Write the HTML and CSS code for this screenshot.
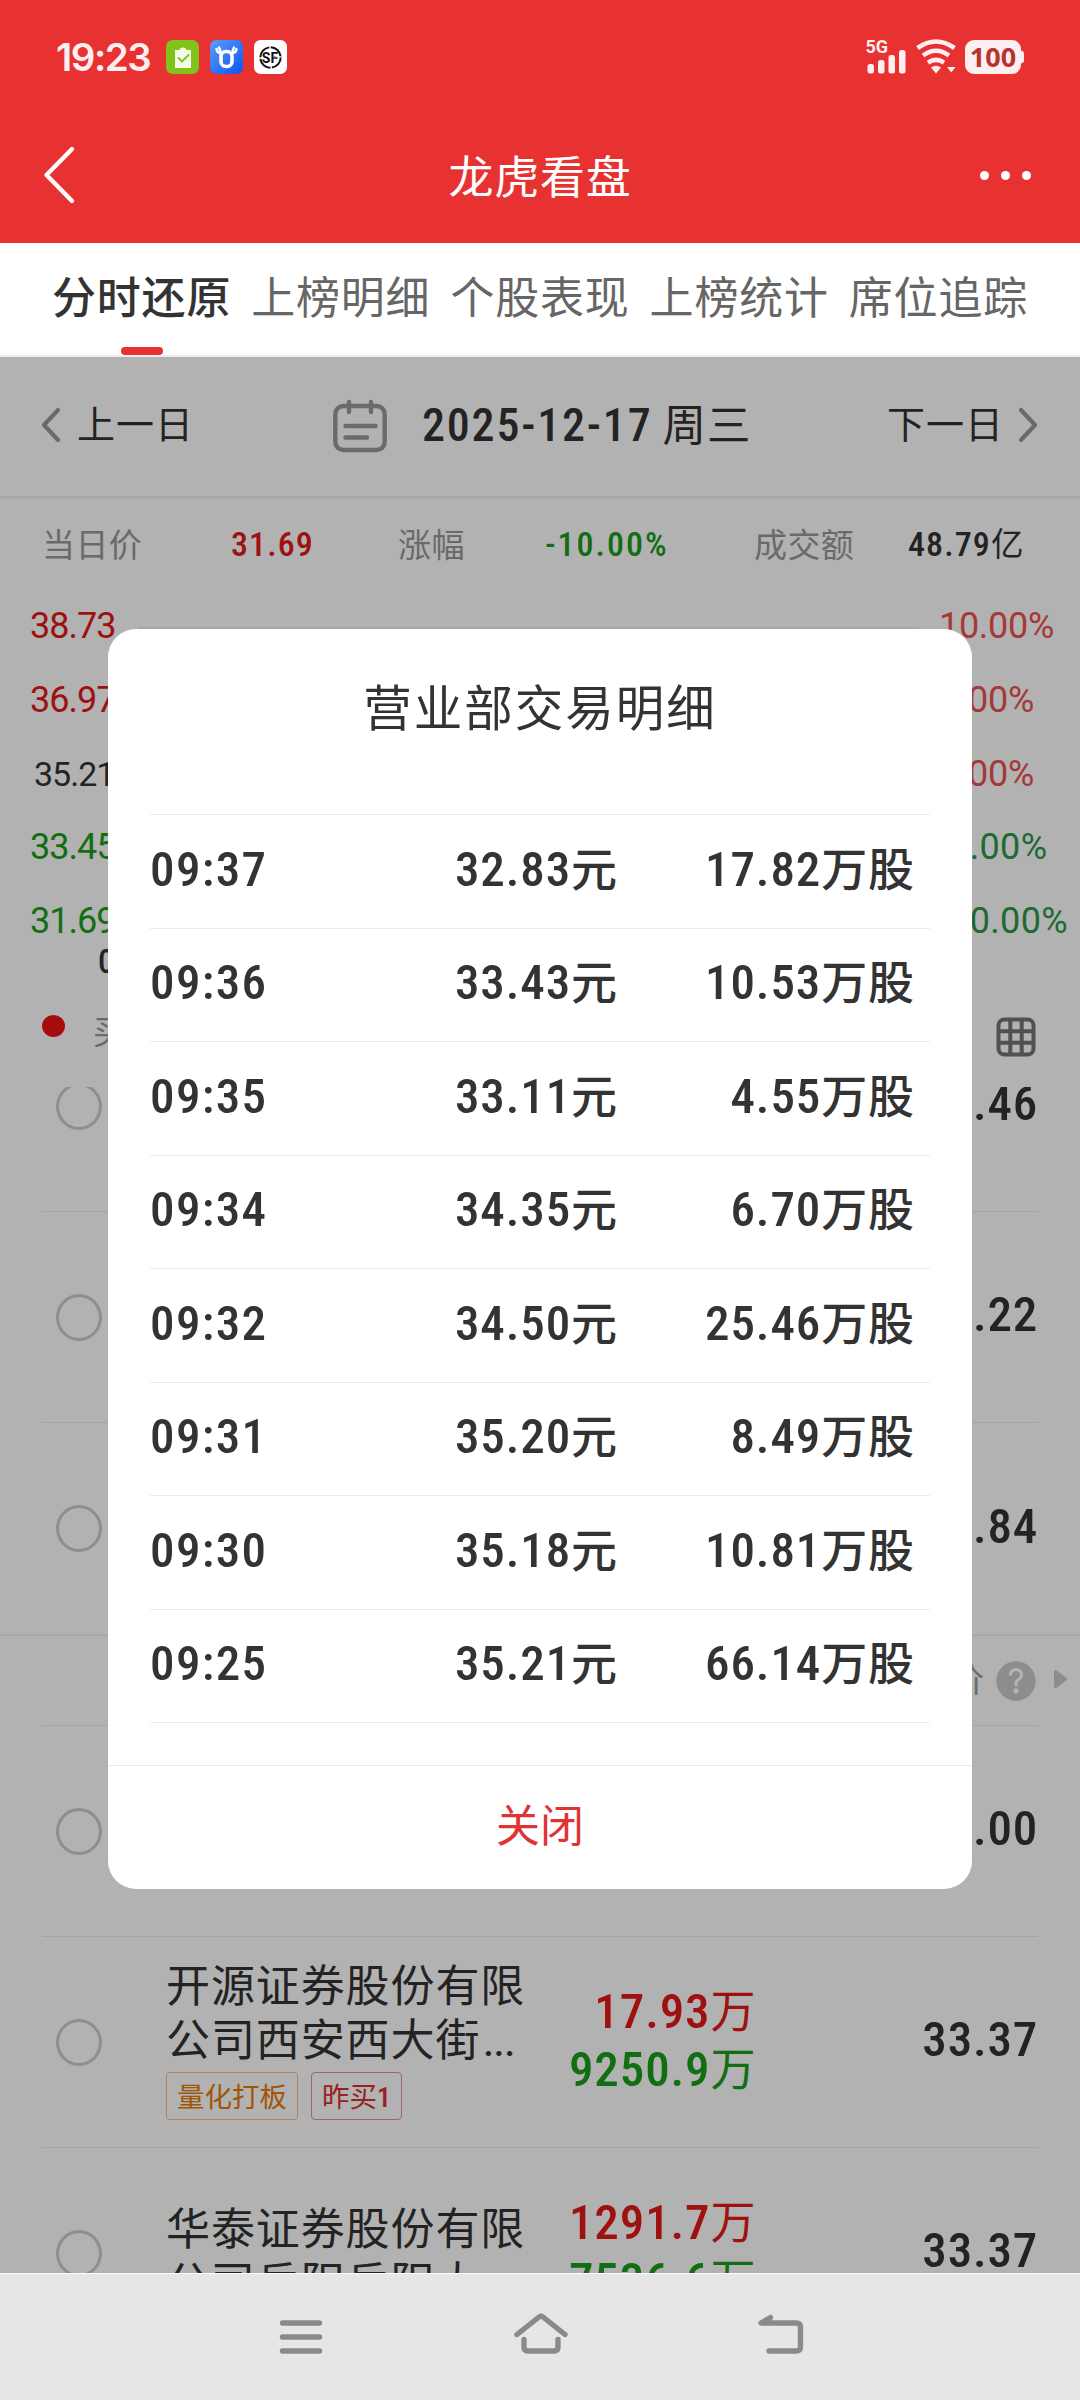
FILE: index.html
```html
<!DOCTYPE html>
<html lang="zh-CN">
<head>
<meta charset="utf-8">
<title>龙虎看盘</title>
<link rel="stylesheet" href="styles.css">
</head>
<body>
<div class="screen">
  <header class="header">
    <div class="status">
      <div class="status-left">
        <span class="clock">19:23</span>
        <svg class="app" viewBox="0 0 33 34"><rect width="33" height="34" rx="6.5" fill="#7fc31c"/><path d="M9 10h4.500q.5-2.500 3.500-2.500t3.500 2.500H25v18H9z" fill="#f3fae6"/><path d="M12 17.500l4 4 7-7" fill="none" stroke="#7fc31c" stroke-width="1.800"/></svg>
        <svg class="app" viewBox="0 0 33 34"><defs><linearGradient id="blue" x1="0" y1="0" x2="1" y2="1"><stop offset="0" stop-color="#5b9dfa"/><stop offset="1" stop-color="#0a55f2"/></linearGradient></defs><rect width="33" height="34" rx="6.500" fill="url(#blue)"/><rect x="11" y="11.500" width="11" height="15" rx="5" fill="none" stroke="#fff" stroke-width="3.600"/><path d="M10 13Q7 12.500 6.500 9M23 13q3-.5 3.500-4M10.500 11L9 7.500M22.500 11L24 7.500" fill="none" stroke="#fff" stroke-width="2.400" stroke-linecap="round"/></svg>
        <svg class="app" viewBox="0 0 33 34"><rect width="33" height="34" rx="6.500" fill="#fff"/><circle cx="16.500" cy="17.500" r="10.200" fill="none" stroke="#111" stroke-width="2" stroke-dasharray="14.500 1.500"/><text x="16" y="22.500" text-anchor="middle" class="sf">SF</text><circle cx="21" cy="17.500" r="1.200" fill="#e83131"/></svg>
      </div>
      <svg class="signals" viewBox="864 36 162 42" width="162" height="42">
        <g fill="#fdefef">
          <text x="865.500" y="52.500" class="net">5G</text>
          <rect x="867.500" y="64" width="6.500" height="9.500" rx="2.500"/><rect x="878" y="60" width="6.500" height="13.500" rx="2.500"/><rect x="888.500" y="55" width="6.500" height="18.500" rx="2.500"/><rect x="899" y="50" width="6.500" height="23.500" rx="2.500"/>
          <path d="M931 67.500q5-3.500 10 0l-5 6zM947 67h8.500l-4.200 5.500z"/>
          <rect x="965" y="40" width="56" height="34" rx="9"/><path d="M1020 50.500q4 0 4 3v7q0 3-4 3z"/>
        </g>
        <path d="M917.500 48q18.500-13 37 0M923 55.500q13-9.500 26 0M928 62.700q8-5.500 16 0" fill="none" stroke="#fdefef" stroke-width="4.600"/>
        <text x="993" y="66.500" text-anchor="middle" class="battery">100</text>
      </svg>
    </div>
    <div class="titlebar">
      <svg class="back" width="34" height="60" viewBox="0 0 34 60"><path d="M30 4L4.500 30 30 56" fill="none" stroke="#fff" stroke-width="4.400" stroke-linecap="round" stroke-linejoin="round"/></svg>
      <h1 class="title">龙虎看盘</h1>
      <div class="more"><i></i><i></i><i></i></div>
    </div>
  </header>
  <nav class="tabs">
    <a class="tab active">分时还原</a><a class="tab">上榜明细</a><a class="tab">个股表现</a><a class="tab">上榜统计</a><a class="tab">席位追踪</a>
  </nav>
  <main class="content">
    <section class="datebar">
      <div class="day"><svg width="20" height="36" viewBox="0 0 20 36"><path d="M17 3L3 18l14 15" class="chev"/></svg><span>上一日</span></div>
      <div class="date">
        <svg width="56" height="56" viewBox="0 0 56 56"><g fill="none" stroke="#999" stroke-width="4.400" stroke-linecap="round"><rect x="3.300" y="9" width="49.400" height="44" rx="8"/><path d="M17 5v10M39 5v10M13.500 29h30M13.500 40.500h21.500"/></g></svg>
        <span class="date-num">2025-12-17</span><span class="week">周三</span>
      </div>
      <div class="day next"><span>下一日</span><svg width="20" height="36" viewBox="0 0 20 36"><path d="M3 3l14 15L3 33" class="chev"/></svg></div>
    </section>
    <section class="stats">
      <span class="label">当日价</span><span class="num red">31.69</span>
      <span class="label">涨幅</span><span class="num change green">-10.00%</span>
      <span class="label">成交额</span><span class="num amount">48.79<span class="yi">亿</span></span>
    </section>
    <section class="chart">
      <div class="axis">
        <span class="red">38.73</span><span class="red">36.97</span><span class="mid">35.21</span><span class="green">33.45</span><span class="green">31.69</span>
      </div>
      <div class="plot"></div>
      <div class="axis percent">
        <span class="up">10.00%</span><span class="up">5.00%</span><span class="up">0.00%</span><span class="down">-5.00%</span><span class="down">-10.00%</span>
      </div>
    </section>
    <div class="times">09:30</div>
    <section class="legend">
      <i class="dot"></i><span>买</span>
      <svg width="40" height="40" viewBox="0 0 40 40"><g fill="none" stroke="#747474" stroke-width="4"><rect x="2.500" y="2.500" width="35" height="35" rx="6"/><path d="M14.300 2v36M25.700 2v36M2 14.300h36M2 25.700h36"/></g></svg>
    </section>
    <section class="list">
      <div class="row"><i class="radio"></i><b class="value">.46</b></div>
      <div class="row"><i class="radio"></i><b class="value">.22</b></div>
      <div class="row last"><i class="radio"></i><b class="value">.84</b></div>
      <div class="group">
        <span>价</span>
        <svg width="40" height="40" viewBox="0 0 40 40"><circle cx="20" cy="20" r="19.700" fill="#cacaca"/><path d="M14.500 13.500q.5-5 5.500-5t5.500 5q0 3-3 5t-2.500 5.500" fill="none" stroke="#fff" stroke-width="3.200" stroke-linecap="round"/><circle cx="20" cy="30" r="2.700" fill="#fff"/></svg>
        <svg class="tri" width="13" height="18" viewBox="0 0 13 18"><path d="M1.500 1.500v15l10-7.500z" fill="#cacaca" stroke="#cacaca" stroke-width="3" stroke-linejoin="round"/></svg>
      </div>
      <div class="row"><i class="radio"></i><b class="value">.00</b></div>
      <div class="row">
        <i class="radio"></i>
        <div class="broker"><div class="name">开源证券股份有限<br>公司西安西大街<span class="dots">...</span></div><div class="tags"><span class="tag orange">量化打板</span><span class="tag crimson">昨买<b>1</b></span></div></div>
        <div class="amounts"><span class="red">17.93<em>万</em></span><span class="green">9250.9<em>万</em></span></div>
        <b class="value">33.37</b>
      </div>
      <div class="row">
        <i class="radio"></i>
        <div class="broker"><div class="name">华泰证券股份有限<br>公司岳阳岳阳大</div></div>
        <div class="amounts"><span class="red">1291.7<em>万</em></span><span class="green">7536.6<em>万</em></span></div>
        <b class="value">33.37</b>
      </div>
    </section>
    <div class="overlay">
      <section class="modal">
        <h2 class="modal-title">营业部交易明细</h2>
        <div class="trades">
          <div class="trade"><span>09:37</span><span>32.83<em>元</em></span><span>17.82<em>万股</em></span></div>
          <div class="trade"><span>09:36</span><span>33.43<em>元</em></span><span>10.53<em>万股</em></span></div>
          <div class="trade"><span>09:35</span><span>33.11<em>元</em></span><span>4.55<em>万股</em></span></div>
          <div class="trade"><span>09:34</span><span>34.35<em>元</em></span><span>6.70<em>万股</em></span></div>
          <div class="trade"><span>09:32</span><span>34.50<em>元</em></span><span>25.46<em>万股</em></span></div>
          <div class="trade"><span>09:31</span><span>35.20<em>元</em></span><span>8.49<em>万股</em></span></div>
          <div class="trade"><span>09:30</span><span>35.18<em>元</em></span><span>10.81<em>万股</em></span></div>
          <div class="trade"><span>09:25</span><span>35.21<em>元</em></span><span>66.14<em>万股</em></span></div>
        </div>
        <div class="close">关闭</div>
      </section>
    </div>
  </main>
  <footer class="navbar">
    <svg width="50" height="44" viewBox="0 0 50 44"><path d="M6.500 11h37M6.500 25h37M6.500 39h37" class="nav-icon"/></svg>
    <svg width="56" height="44" viewBox="0 0 56 44"><path d="M4 22.500L26 5q2-1.600 4 0l22 17.500M11 27.500V35q0 4 4 4h26q4 0 4-4v-7.500" class="nav-icon"/></svg>
    <svg width="50" height="44" viewBox="0 0 50 44"><path d="M14.500 5.500L5 11h35q4.500 0 4.500 4v20q0 4-4.500 4H13" class="nav-icon"/></svg>
  </footer>
</div>
</body>
</html>
```
FILE: styles.css
```css
* { box-sizing: border-box; margin: 0; padding: 0; }
body { font-family: "Noto Sans CJK SC", sans-serif; color: #333; background: #fff; }
i, em { font-style: normal; }
svg { display: block; flex: none; }

.screen { width: 1080px; height: 2400px; display: flex; flex-direction: column; overflow: hidden; }
.red { color: #e41919; }
.green { color: #1b9e1b; }

/* header */
.header { height: 243px; background: #e83131; color: #fff; }
.status { height: 112px; padding: 2px 54px 0 56px; display: flex; align-items: center; justify-content: space-between; }
.status-left { display: flex; align-items: center; gap: 11px; }
.clock { width: 99px; font: 600 38.500px/50px Inter, sans-serif; letter-spacing: -1.500px; color: #fdefef; white-space: nowrap; }
.app { width: 33px; height: 34px; }
.sf { font: 700 14px Roboto, sans-serif; fill: #111; }
.net { font: 700 18px Roboto, sans-serif; }
.battery { font: 700 27px "Noto Sans", sans-serif; fill: #b83230; }
.titlebar { height: 126px; padding: 0 49px 0 42px; display: flex; align-items: center; justify-content: space-between; }
.title { width: 200px; margin-left: 24px; font-size: 45px; font-weight: 400; line-height: 60px; letter-spacing: .7px; text-align: center; white-space: nowrap; }
.more { display: flex; gap: 12px; }
.more i { width: 9px; height: 9px; border-radius: 50%; background: #fff; }

/* tabs */
.tabs { height: 114px; padding: 0 42px; display: flex; border-bottom: 2px solid #eee; }
.tab { position: relative; flex: 1; text-align: center; font-size: 44px; line-height: 105px; letter-spacing: .8px; color: #666; white-space: nowrap; }
.active { color: #333; font-weight: 500; }
.active::after { content: ""; position: absolute; left: 79px; bottom: 0; width: 42px; height: 8px; border-radius: 4px; background: #e83131; }

.content { position: relative; height: 1916px; overflow: hidden; }
.overlay { position: absolute; inset: 0; padding-top: 272px; background: rgba(0, 0, 0, .3); }

/* date switcher */
.datebar { height: 142px; padding: 0 42px 4px 41px; border-bottom: 3px solid #f2f2f2; display: grid; grid-template-columns: 291px 1fr auto; align-items: center; }
.day { display: flex; align-items: center; gap: 16px; font-size: 38px; line-height: 50px; letter-spacing: 1px; }
.day span { padding-bottom: 5px; }
.next { gap: 14px; }
.chev { fill: none; stroke: #999; stroke-width: 4.200; stroke-linecap: round; stroke-linejoin: round; }
.date { display: flex; align-items: center; }
.date-num { margin-left: 34px; font: 500 46px/56px Roboto, sans-serif; font-stretch: 75%; letter-spacing: 1.800px; }
.week { margin-left: 10px; font-size: 43.500px; line-height: 56px; padding-bottom: 4px; letter-spacing: 1px; }

/* day summary */
.stats { height: 90px; padding: 0 42px; display: grid; grid-template-columns: 189px 167px 147px 209px 154px 1fr; align-items: center; white-space: nowrap; }
.label { font-size: 33px; line-height: 44px; letter-spacing: .4px; color: #999; padding-bottom: 3px; }
.num { font: 500 34px/44px Roboto, "Noto Sans CJK SC", sans-serif; font-stretch: 75%; letter-spacing: 1.100px; }
.change { letter-spacing: 2px; }
.yi { font-size: 32.500px; font-weight: 400; }

/* chart axes */
.chart { height: 369px; display: flex; }
.axis { width: 110px; padding: 1px 0 0 30px; display: grid; grid-template-rows: repeat(5, 73.800px); font: 400 36px/73.800px Roboto, sans-serif; letter-spacing: -1px; }
.axis .mid { padding-left: 4px; font-size: 34px; }
.plot { width: 781px; margin: 38px 0 0 28px; border-top: 2px solid #f0f0f0; }
.percent { width: 150px; padding-left: 20px; letter-spacing: -.3px; white-space: nowrap; }
.down { color: #2a9a4a; letter-spacing: .3px; }
.axis .green { letter-spacing: -1px; }
.up { color: #ee5151; }
.times { height: 36px; margin-top: -14px; padding-left: 98px; font: 500 33px/36px Roboto, sans-serif; font-stretch: 75%; }
.legend { height: 107px; padding: 0 44px 0 42px; display: flex; align-items: center; color: #999; font-size: 33px; line-height: 44px; }
.legend .dot { width: 23px; height: 22px; margin: 0 28px 16px 0; border-radius: 50%; background: #ed1414; }
.legend span { padding-bottom: 8px; }
.legend svg { margin-left: auto; margin-top: 6px; }

/* broker list */
.list { height: 1186px; overflow: hidden; }
.row { height: 211px; margin: 0 42px; border-bottom: 1px solid #ebebeb; display: grid; grid-template-columns: 124px 366px 222px 1fr; align-items: center; }
.row:first-child { margin-top: -86px; }
.last { border-bottom: 0; }
.radio { width: 46px; height: 47px; margin-left: 14px; border: 3px solid #ccc; border-radius: 50%; }
.value { grid-column: 4; justify-self: end; padding-bottom: 4px; font: 500 49px/56px Roboto, sans-serif; font-stretch: 75%; letter-spacing: .8px; }
.group { height: 92px; padding: 0 12px 0 951px; border-top: 2px solid #f3f3f3; display: flex; align-items: center; position: relative; }
.group::after { content: ""; position: absolute; left: 42px; right: 42px; bottom: 0; height: 1px; background: #ebebeb; }
.group span { width: 45px; font-size: 33px; line-height: 44px; padding-bottom: 7px; color: #999; }
.tri { margin: -5px 0 0 18px; }
.name { font-size: 44px; line-height: 54px; letter-spacing: .9px; white-space: nowrap; }
.dots { font-family: Roboto, sans-serif; font-weight: 500; font-size: 38px; letter-spacing: 0; margin-left: 3px; }
.tags { display: flex; gap: 13px; margin: 2px 0 9px; }
.tag { height: 48px; padding: 0 10px; border: 1px solid; border-radius: 4px; font-size: 27.500px; line-height: 44px; white-space: nowrap; }
.tag b { font: 500 28px Roboto, sans-serif; font-stretch: 75%; }
.orange { color: #e87a08; border-color: #f9bd80; }
.crimson { color: #dc3030; border-color: #ee9090; }
.amounts { display: grid; justify-items: end; padding: 0 0 2px; font: 500 49px/57px Roboto, "Noto Sans CJK SC", sans-serif; font-stretch: 75%; letter-spacing: .9px; }
.amounts em { font-size: 45px; font-weight: 400; letter-spacing: -1.500px; }

/* trade detail dialog */
.modal { width: 864px; height: 1260px; margin: 0 auto; border-radius: 28px; background: #fff; }
.modal-title { height: 185px; font-size: 48.500px; font-weight: 400; line-height: 152px; letter-spacing: 2px; text-align: center; }
.trades { margin: 0 42px; height: 951px; border-top: 1px solid #ebebeb; }
.trade { height: 113.500px; padding: 0 15px 3px 0; border-bottom: 1px solid #ebebeb; display: grid; grid-template-columns: 200px 268px 1fr; align-items: center; font: 500 49px/60px Roboto, "Noto Sans CJK SC", sans-serif; font-stretch: 75%; letter-spacing: 1.400px; white-space: nowrap; }
.trade span + span { text-align: right; letter-spacing: .9px; }
.trade em { font-size: 46px; font-weight: 500; }
.close { height: 124px; border-top: 1px solid #ebebeb; font-size: 44px; line-height: 115px; text-align: center; color: #e03333; }

/* system navigation */
.navbar { height: 127px; border-top: 1px solid #fff; background: #e6e6e6; display: flex; justify-content: center; gap: 187px; padding: 38px 0 0 1px; }
.nav-icon { fill: none; stroke: #8a8a8a; stroke-width: 5.400; stroke-linecap: round; stroke-linejoin: round; }
```
